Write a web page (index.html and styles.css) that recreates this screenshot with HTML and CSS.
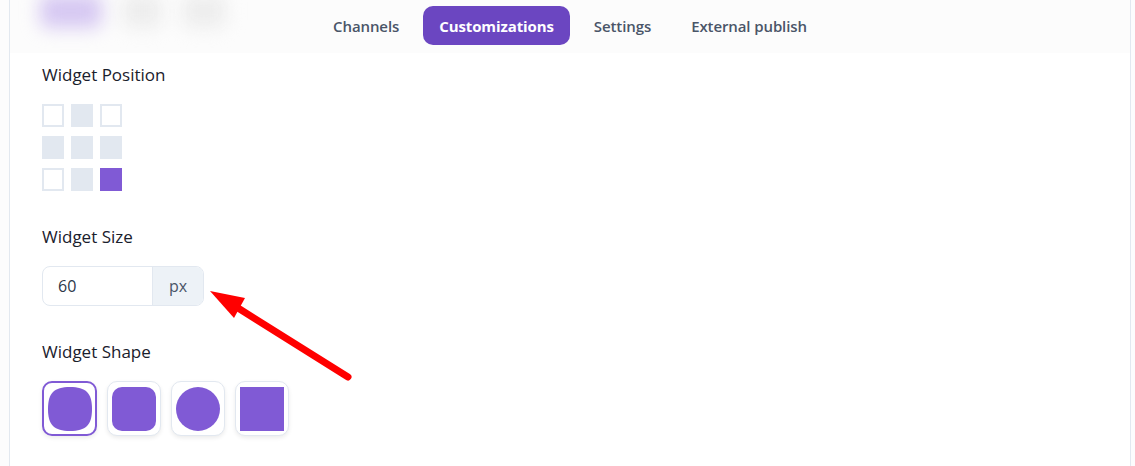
FILE: index.html
```html
<!DOCTYPE html>
<html lang="en">
<head>
<meta charset="utf-8">
<title>Customizations</title>
<link rel="stylesheet" href="styles.css">
</head>
<body>
<div class="frame">
  <header class="topbar">
    <div class="brand-blur" aria-hidden="true">
      <span class="blob blob-purple"></span>
      <span class="blob blob-gray"></span>
      <span class="blob blob-gray2"></span>
    </div>
    <nav class="tabs">
      <a class="tab">Channels</a>
      <a class="tab tab-active">Customizations</a>
      <a class="tab">Settings</a>
      <a class="tab">External publish</a>
    </nav>
    <div></div>
  </header>

  <main class="panel">
    <section class="field">
      <h3 class="label">Widget Position</h3>
      <div class="pos-grid">
        <span class="cell cell-empty"></span>
        <span class="cell cell-fill"></span>
        <span class="cell cell-empty"></span>
        <span class="cell cell-fill"></span>
        <span class="cell cell-fill"></span>
        <span class="cell cell-fill"></span>
        <span class="cell cell-empty"></span>
        <span class="cell cell-fill"></span>
        <span class="cell cell-active"></span>
      </div>
    </section>

    <section class="field">
      <h3 class="label">Widget Size</h3>
      <div class="input-group">
        <span class="input-value">60</span>
        <span class="input-addon">px</span>
      </div>
    </section>

    <section class="field">
      <h3 class="label">Widget Shape</h3>
      <div class="shapes">
        <button class="shape-btn shape-selected">
          <svg width="44" height="44" viewBox="0 0 44 44"><path d="M22 0 C38 0 44 6 44 22 C44 38 38 44 22 44 C6 44 0 38 0 22 C0 6 6 0 22 0 Z" fill="#805ad5"/></svg>
        </button>
        <button class="shape-btn"><span class="shape shape-rounded"></span></button>
        <button class="shape-btn"><span class="shape shape-circle"></span></button>
        <button class="shape-btn"><span class="shape shape-square"></span></button>
      </div>
    </section>

    <svg class="annotation" width="170" height="110" viewBox="0 0 170 110" aria-hidden="true">
      <line x1="38" y1="28" x2="148" y2="97" stroke="#ff0000" stroke-width="7" stroke-linecap="round"/>
      <polygon points="10,11 45,18 34,38" fill="#ff0000"/>
    </svg>
  </main>
</div>
</body>
</html>
```

FILE: styles.css
```css
* { box-sizing: border-box; }

html, body {
  margin: 0;
  padding: 0;
}

body {
  background: #fcfcfd;
  font-family: "Open Sans", "Lato", sans-serif;
  color: #2d3748;
  height: 466px;
  overflow: hidden;
}

.frame {
  position: relative;
  margin: 0 4px 0 9px;
  border-left: 1px solid #e2e8f0;
  border-right: 1px solid #e2e8f0;
  min-height: 466px;
  background: #ffffff;
}

.topbar {
  display: grid;
  grid-template-columns: 1fr auto 1fr;
  align-items: start;
  height: 53px;
  padding-top: 6px;
  background: #fcfcfc;
  overflow: hidden;
}

.brand-blur {
  display: flex;
  align-items: center;
  gap: 20px;
  padding-left: 30px;
  margin-top: -12px;
  filter: blur(9px);
}

.blob {
  display: block;
  height: 34px;
  border-radius: 8px;
}

.blob-purple { width: 62px; background: #d6c8f2; }
.blob-gray { width: 40px; background: #ededed; }
.blob-gray2 { width: 44px; background: #ededed; }

.tabs {
  display: flex;
  gap: 8px;
}

.tab {
  display: flex;
  align-items: center;
  height: 39px;
  padding: 0 16px;
  border-radius: 10px;
  font-size: 15px;
  font-weight: 600;
  letter-spacing: -0.1px;
  color: #4a5568;
  cursor: pointer;
}

.tab-active {
  background: #6b46c1;
  color: #ffffff;
  font-weight: 700;
}

.panel {
  position: relative;
  display: flex;
  flex-direction: column;
  gap: 34px;
  padding: 10px 32px 30px;
  background: #ffffff;
}

.label {
  margin: 0 0 17px;
  font-size: 17px;
  line-height: 24px;
  font-weight: 400;
  color: #1a202c;
}

.pos-grid {
  display: grid;
  grid-template-columns: repeat(3, 22px);
  grid-auto-rows: 23px;
  column-gap: 7px;
  row-gap: 9px;
}

.cell { display: block; }
.cell-empty { border: 2px solid #e2e8f0; background: #fff; }
.cell-fill { background: #e2e8f0; }
.cell-active { background: #805ad5; }

.input-group {
  display: flex;
  width: 162px;
  height: 40px;
  border: 1px solid #e2e8f0;
  border-radius: 8px;
  overflow: hidden;
  font-size: 16px;
}

.input-value {
  flex: 1;
  display: flex;
  align-items: center;
  padding-left: 15px;
  color: #2d3748;
}

.input-addon {
  width: 51px;
  display: flex;
  align-items: center;
  justify-content: center;
  background: #edf2f7;
  border-left: 1px solid #e2e8f0;
  color: #4a5568;
}

.shapes {
  display: flex;
  gap: 10px;
}

.shape-btn {
  width: 54px;
  height: 55px;
  padding: 0;
  display: flex;
  align-items: center;
  justify-content: center;
  background: #ffffff;
  border: 1px solid #e2e8f0;
  border-radius: 10px;
  box-shadow: 0 2px 4px rgba(0, 0, 0, 0.08);
  cursor: pointer;
}

.shape-selected {
  width: 55px;
  border: 2px solid #805ad5;
}

.shape {
  display: block;
  width: 44px;
  height: 44px;
  background: #805ad5;
}

.shape-rounded { border-radius: 10px; }
.shape-circle { border-radius: 50%; }
.shape-square { border-radius: 0; }

.annotation {
  position: absolute;
  left: 190px;
  top: 227px;
  pointer-events: none;
}
```
